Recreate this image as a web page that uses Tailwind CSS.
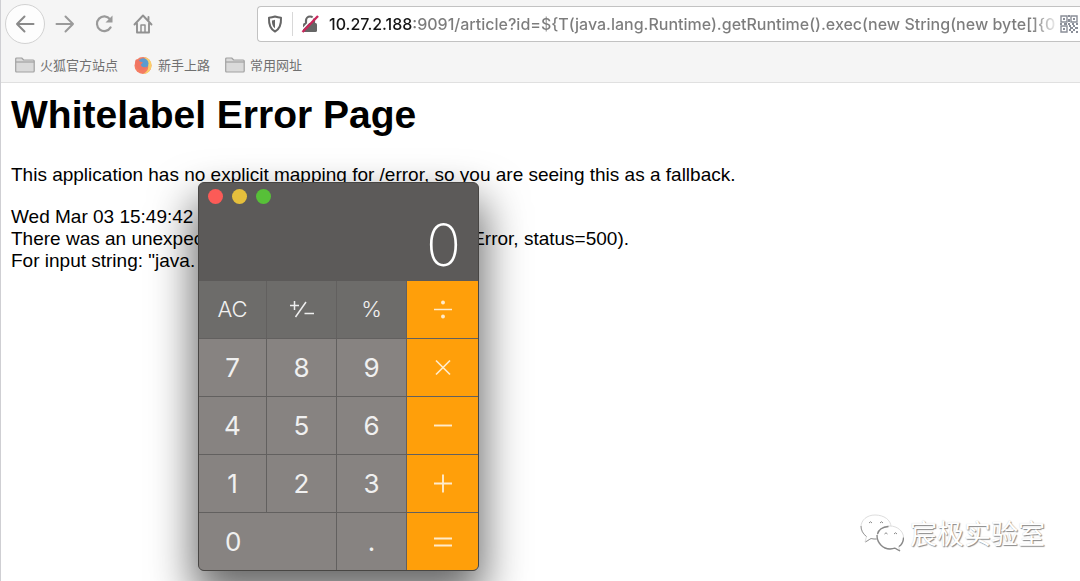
<!DOCTYPE html>
<html lang="zh-CN">
<head>
<meta charset="utf-8">
<title>Whitelabel Error Page</title>
<script src="https://cdn.jsdelivr.net/npm/@tailwindcss/browser@4"></script>
</head>
<body class="relative min-h-screen overflow-hidden border-l border-[#cfcfd3] bg-white font-['Liberation_Sans',Arial,'Noto_Sans_CJK_SC',sans-serif] text-black">

<header class="border-b border-[#e0e0e0] bg-[#f5f5f5]">
  <div class="flex h-12 items-center pl-1">
    <nav class="flex items-center" aria-label="Navigation">
      <button aria-label="Back" class="flex size-10 items-center justify-center rounded-full border border-[#d2d2d2] bg-[#fdfdfd]">
        <svg class="size-5" viewBox="0 0 20 20" fill="none" stroke="#8a8a8a" stroke-width="2" stroke-linecap="round" stroke-linejoin="round"><path d="M18.500 10H2M9.500 2.500L2 10l7.500 7.500"/></svg>
      </button>
      <button aria-label="Forward" class="ml-2.5 flex size-5 items-center justify-center">
        <svg class="size-5" viewBox="0 0 20 20" fill="none" stroke="#9a9a9a" stroke-width="2" stroke-linecap="round" stroke-linejoin="round"><path d="M1.500 10H18M10.500 2.500L18 10l-7.500 7.500"/></svg>
      </button>
      <button aria-label="Reload" class="ml-5 flex size-5 items-center justify-center">
        <svg class="size-5" viewBox="0 0 20 20" fill="none" stroke="#9a9a9a" stroke-width="2.200" stroke-linecap="round"><path d="M15.600 13.400A7.300 7.300 0 1 1 15 5.200"/><path d="M17.500 1.500v7h-7z" fill="#9a9a9a" stroke="none"/></svg>
      </button>
      <button aria-label="Home" class="ml-[18px] flex size-5 items-center justify-center">
        <svg class="size-5" viewBox="0 0 20 20" fill="none" stroke="#919191" stroke-width="1.900" stroke-linecap="round" stroke-linejoin="round"><path d="M1.500 10.500L10 1.500l8.500 9M4 9.500V18.500h12V9.500M15.500 3v3"/><path d="M8 18v-7h4v7" stroke-width="1.500"/></svg>
      </button>
    </nav>
    <div class="ml-[104px] flex h-9 min-w-0 flex-1 items-center rounded-l border border-r-0 border-[#c2c2c2] bg-white pl-[9px]">
      <svg class="h-[18px] w-4 shrink-0" viewBox="0 0 16 18" role="img" aria-label="Tracking protection"><path d="M8 1.500c2.300.800 4.300 1.100 6 1.200.300 6.200-.800 11-6 13.800C2.800 13.700 1.700 8.900 2 2.700c1.700-.100 3.700-.400 6-1.200z" fill="none" stroke="#666" stroke-width="2" stroke-linejoin="round"/><path d="M8 4.800v8.500C5.300 11.300 4.900 8.600 4.900 5.500 6 5.400 7 5.200 8 4.800z" fill="#666"/></svg>
      <span class="ml-[9px] h-6 w-px shrink-0 bg-[#d8d8d8]"></span>
      <svg class="ml-2 h-[18px] w-[18px] shrink-0" viewBox="0 0 18 18" role="img" aria-label="Connection not secure"><path d="M5 9V5.500a4 4 0 0 1 8 0V9" fill="none" stroke="#666" stroke-width="2.200"/><rect x="2" y="8" width="14" height="9" rx="1.500" fill="#666"/><path d="M15 0L0 15.500" stroke="#fff" stroke-width="1.500"/><path d="M17 1L1.500 17" stroke="#c8265a" stroke-width="2.400"/></svg>
      <input aria-label="Address" type="text" spellcheck="false" class="ml-2.5 h-full min-w-0 flex-1 bg-[linear-gradient(to_right,#151515_83px,#7c7c7c_83px,#7c7c7c_calc(100%-28px),transparent)] bg-clip-text font-[Inter,'Noto_Sans',sans-serif] text-[16px] font-medium text-transparent outline-none" value="10.27.2.188:9091/article?id=${T(java.lang.Runtime).getRuntime().exec(new String(new byte[]{0">
      <button aria-label="QR code" class="mr-0.5 shrink-0">
        <svg class="size-[18px]" viewBox="0 0 18 18" fill="none" stroke="#8a8e98" stroke-width="1.400"><path d="M1 1h6v6H1zM11 1h6v6h-6zM1 11h6v6H1z"/><path d="M3 4h2M13 4h2M3 14h2" stroke-width="2"/><path d="M9 0v2M9 4v3M0 9h2M4 9h3M8 9h2M12 9h2M16 9h2M9 11h2M13 11h2M10 13h3M15 13h3M9 15h2M13 15h2M11 17h2M16 17h2" stroke-width="2"/></svg>
      </button>
    </div>
  </div>
  <nav class="flex h-[34px] items-center gap-[15px] pl-3.5 font-['Noto_Sans_CJK_SC',sans-serif] text-[13px] text-[#707070]" aria-label="Bookmarks">
    <a href="#" class="flex items-center gap-[5px]">
      <svg class="h-4 w-5" viewBox="0 0 20 16" fill="#dadada" stroke="#a2a2a2" stroke-width="1.200" stroke-linejoin="round"><path d="M.700 14V2q0-1 1-1h5l2 2h9.500q1 0 1 1v10q0 1-1 1H1.700q-1 0-1-1z"/><path d="M.700 5h18.500"/></svg>
      火狐官方站点
    </a>
    <a href="#" class="flex items-center gap-[5px]">
      <svg class="size-5" viewBox="0 0 20 20"><circle cx="10" cy="10.500" r="8.500" fill="#f47c62"/><path d="M11 2c5 1 8 4.500 7.500 9-.400 4.500-4 8-8.500 8 4-2 6-5 5-9.500-.500-3-2-5-4-7.500z" fill="#fbcf6a"/><circle cx="10.200" cy="8.500" r="5.300" fill="#5b9bd0"/><path d="M2.500 5c2-1 3.500 0 4.500 1.500L10 7.500 8 9.500c0 2.500 3 3.500 6 2-1 4-6 5-9 2.500C2.500 11.500 1.500 8 2.500 5z" fill="#f07562"/></svg>
      新手上路
    </a>
    <a href="#" class="flex items-center gap-[5px]">
      <svg class="h-4 w-5" viewBox="0 0 20 16" fill="#dadada" stroke="#a2a2a2" stroke-width="1.200" stroke-linejoin="round"><path d="M.700 14V2q0-1 1-1h5l2 2h9.500q1 0 1 1v10q0 1-1 1H1.700q-1 0-1-1z"/><path d="M.700 5h18.500"/></svg>
      常用网址
    </a>
  </nav>
</header>

<main class="px-2.5 pt-2 text-[19px] leading-[22px]">
  <h1 class="text-[39px] leading-[48px] font-bold">Whitelabel Error Page</h1>
  <p class="mt-[25px]">This application has no explicit mapping for /error, so you are seeing this as a fallback.</p>
  <div class="mt-5">Wed Mar 03 15:49:42</div>
  <div class="flex w-[618px] justify-between"><span>There was an unexpected</span><span>Error, status=500).</span></div>
  <div>For input string: "java.</div>
</main>

<section aria-label="Calculator" class="absolute top-[182px] left-[197px] w-[281px] overflow-hidden rounded-md border border-[#484644] bg-[#5c5a59] font-[Inter,'Noto_Sans',sans-serif] text-[#f0f0f0] shadow-[0_22px_44px_4px_rgba(0,0,0,0.6)]">
  <div class="flex h-[98px] flex-col justify-between">
    <div class="flex gap-[9px] pt-1.5 pl-[9px]">
      <button aria-label="Close" class="size-[15px] rounded-full bg-[#fc5b57]"></button>
      <button aria-label="Minimize" class="size-[15px] rounded-full bg-[#e5bf3c]"></button>
      <button aria-label="Zoom" class="size-[15px] rounded-full bg-[#57c038]"></button>
    </div>
    <output class="pr-[17px] pb-1 text-right text-[58px] leading-[64px] font-extralight text-white">0</output>
  </div>
  <div class="grid auto-rows-[57px] grid-cols-[67px_69px_69px_1fr] gap-px bg-[#62605f] text-[26px]">
    <button class="bg-[#6d6c6a] text-[22px] font-light">AC</button>
    <button aria-label="Plus minus" class="flex items-center justify-center bg-[#6d6c6a]"><svg class="h-5 w-6" viewBox="0 0 24 20" fill="none" stroke="#eee" stroke-width="1.500"><path d="M0 5.500h9M4.500 1v9M5.500 17L16 2M14.500 13.500h10"/></svg></button>
    <button class="bg-[#6d6c6a] text-[22px] font-light">%</button>
    <button aria-label="Divide" class="flex items-center justify-center bg-[#ff9f0a]"><svg class="size-5" viewBox="0 0 20 20" stroke="#ffebcb" stroke-width="1.500"><path d="M1 9.500h18"/><circle cx="10" cy="2.500" r="1.200" fill="#ffebcb"/><circle cx="10" cy="16.500" r="1.200" fill="#ffebcb"/></svg></button>
    <button class="bg-[#878381]">7</button>
    <button class="bg-[#878381]">8</button>
    <button class="bg-[#878381]">9</button>
    <button aria-label="Multiply" class="flex items-center justify-center bg-[#ff9f0a]"><svg class="size-5" viewBox="0 0 20 20" stroke="#ffebcb" stroke-width="1.700"><path d="M3 2.500l14 14M17 2.500L3 16.500"/></svg></button>
    <button class="bg-[#878381]">4</button>
    <button class="bg-[#878381]">5</button>
    <button class="bg-[#878381]">6</button>
    <button aria-label="Subtract" class="flex items-center justify-center bg-[#ff9f0a]"><svg class="size-5" viewBox="0 0 20 20" stroke="#ffebcb" stroke-width="1.900"><path d="M1 9.500h18"/></svg></button>
    <button class="bg-[#878381]">1</button>
    <button class="bg-[#878381]">2</button>
    <button class="bg-[#878381]">3</button>
    <button aria-label="Add" class="flex items-center justify-center bg-[#ff9f0a]"><svg class="size-5" viewBox="0 0 20 20" stroke="#ffebcb" stroke-width="1.900"><path d="M1 9.500h18M10 .500v18"/></svg></button>
    <button class="col-span-2 bg-[#878381] pl-[26px] text-left">0</button>
    <button class="bg-[#878381]">.</button>
    <button aria-label="Equals" class="flex items-center justify-center bg-[#ff9f0a]"><svg class="size-5" viewBox="0 0 20 20" stroke="#ffebcb" stroke-width="1.900"><path d="M1 6.500h18M1 13.500h18"/></svg></button>
  </div>
</section>

<div class="absolute right-[35px] bottom-7 flex items-center gap-1.5 font-['Noto_Sans_CJK_SC',sans-serif] text-[27px] leading-10 text-white [text-shadow:1px_1px_1px_#888,0_0_1px_#ccc]">
  <svg class="h-[38px] w-11" viewBox="0 0 44 38" fill="#fff" stroke="#dedede" stroke-width="1"><path d="M15 1C7 1 1 6 1 13c0 4 2 7 5.500 9.500L5 28l6-3.500c2 .500 4 .700 6 .500 8 0 14-5 14-12S24 1 15 1z"/><path d="M1 12c0 4 2 8 5.500 10.500M5.500 28l5.500-3.500c2 .500 4 .700 6 .500" fill="none" stroke="#999"/><path d="M30 12c-8 0-13 5-13 11.500S23 35 30 35c2 0 3.500-.300 5-.800l5 2.800-1.500-4.500C41.500 30 43.500 27 43.500 23.500 43.500 17 37 12 30 12z"/><path d="M17 21c0 8 6 14 13 14 2 0 3.500-.300 5-.800l5 2.800M17.500 20c1-4 5-7 11-7.500M39 32.500c3-2 4.500-5 4.500-9" fill="none" stroke="#888" stroke-width="1.300"/><path d="M9 9q1.500-2.500 3 0M20 9q1.500-2.500 3 0M24.500 20q1.500-2.500 3 0M34 20q1.500-2.500 3 0" fill="none" stroke="#888"/></svg>
  <span>宸极实验室</span>
</div>
</body>
</html>
